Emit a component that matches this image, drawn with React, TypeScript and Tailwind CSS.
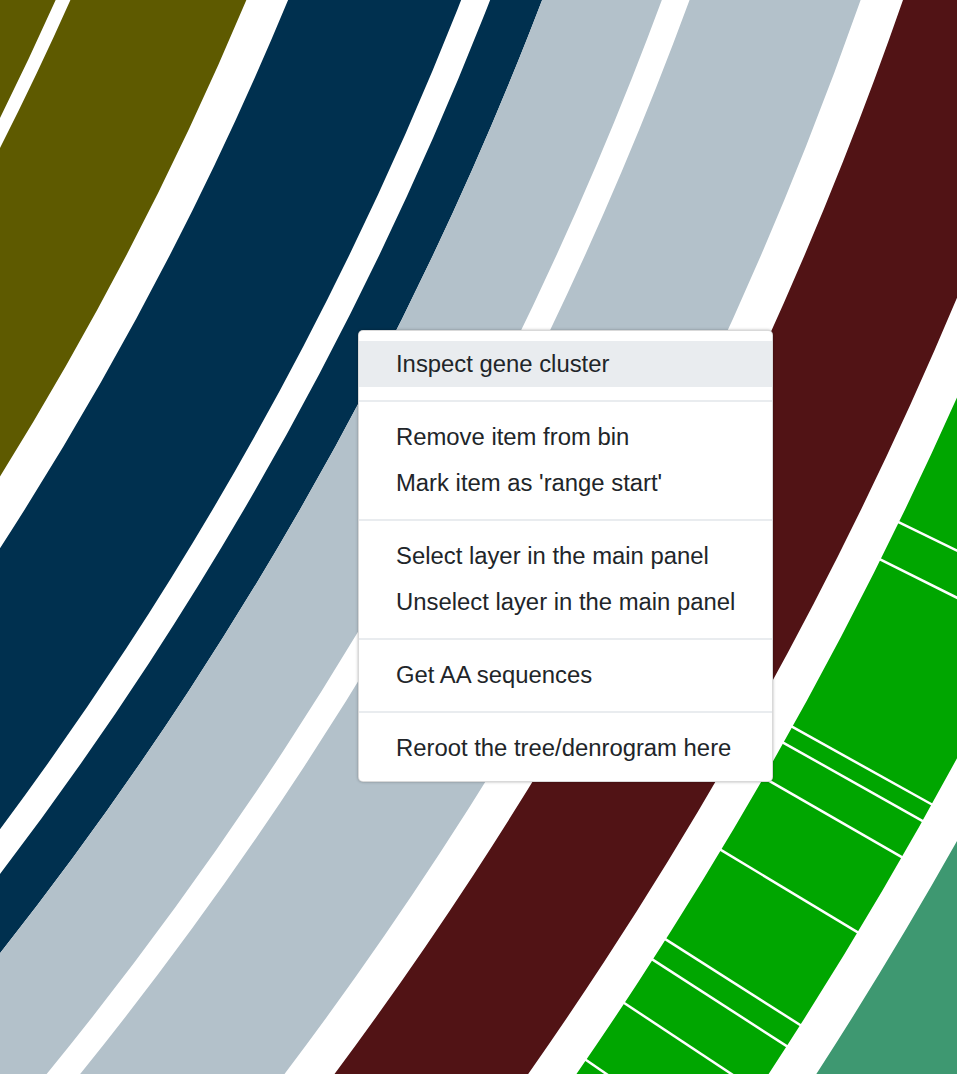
import React from "react";

const CX = -2863;
const CY = -1306;

const rings: { r0: number; r1: number; color: string }[] = [
  { r0: 2900, r1: 3197.5, color: "#5e5a00" },
  { r0: 3211, r1: 3372.5, color: "#5e5a00" },
  { r0: 3411, r1: 3571.5, color: "#00304f" },
  { r0: 3598.5, r1: 3647, color: "#00304f" },
  { r0: 3647, r1: 3759, color: "#b3c1ca" },
  { r0: 3785, r1: 3946, color: "#b3c1ca" },
  { r0: 3986, r1: 4143, color: "#511315" },
  { r0: 4182.6, r1: 4342, color: "#00a600" },
  { r0: 4382, r1: 5200, color: "#3e9871" },
];

const radialAngles = [25.92, 26.49, 29.08, 29.33, 29.88, 31.03, 32.47, 32.8, 33.51, 34.45];

function Canvas() {
  return (
    <svg width={957} height={1074} viewBox="0 0 957 1074" className="absolute inset-0 block">
      <rect x={0} y={0} width={957} height={1074} fill="#ffffff" />
      {rings.map((g, i) => (
        <circle
          key={i}
          cx={CX}
          cy={CY}
          r={(g.r0 + g.r1) / 2}
          fill="none"
          stroke={g.color}
          strokeWidth={g.r1 - g.r0}
        />
      ))}
      {radialAngles.map((a, i) => {
        const t = (a * Math.PI) / 180;
        const ra = 4176;
        const rb = 4348;
        return (
          <line
            key={i}
            x1={CX + ra * Math.cos(t)}
            y1={CY + ra * Math.sin(t)}
            x2={CX + rb * Math.cos(t)}
            y2={CY + rb * Math.sin(t)}
            stroke="#ffffff"
            strokeWidth={2.5}
          />
        );
      })}
    </svg>
  );
}

function Item({ children, active = false }: { children: React.ReactNode; active?: boolean }) {
  return (
    <div
      className={
        "h-[46px] flex items-center pl-[37px] pr-[20px] whitespace-nowrap text-[23.85px] leading-none text-[#212529] " +
        (active ? "bg-[#e9ecef]" : "bg-transparent")
      }
    >
      {children}
    </div>
  );
}

function Divider() {
  return <div className="my-[12.5px] h-[2px] bg-[#e9ecef]" />;
}

export default function App() {
  return (
    <div
      className="relative w-[957px] h-[1074px] overflow-hidden bg-white"
      style={{ fontFamily: '"Liberation Sans", Arial, Helvetica, sans-serif' }}
    >
      <Canvas />
      <div className="absolute left-[358px] top-[330px] w-[415px] py-[10px] bg-white border border-black/15 rounded-[5px] shadow-[0_0_3px_rgba(0,0,0,0.3)]">
        <Item active>Inspect gene cluster</Item>
        <Divider />
        <Item>Remove item from bin</Item>
        <Item>Mark item as 'range start'</Item>
        <Divider />
        <Item>Select layer in the main panel</Item>
        <Item>Unselect layer in the main panel</Item>
        <Divider />
        <Item>Get AA sequences</Item>
        <Divider />
        <Item>Reroot the tree/denrogram here</Item>
      </div>
    </div>
  );
}
